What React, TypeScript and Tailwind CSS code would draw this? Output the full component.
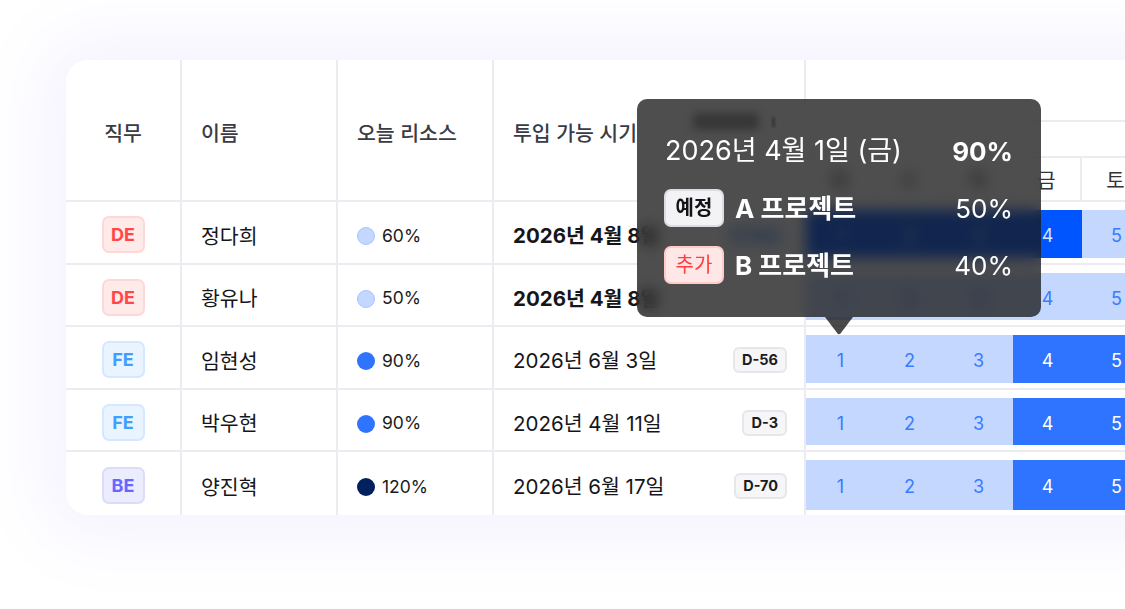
import React from "react";

type Cell = "L" | "M" | "B";
type Row = {
  role: "DE" | "FE" | "BE";
  name: string;
  res: string;
  dot: string;
  date: string;
  bold?: boolean;
  dday?: string;
  ddayBlue?: boolean;
  cells: Cell[];
  h: string;
  last?: boolean;
};

const rows: Row[] = [
  { role: "DE", name: "정다희", res: "60%", dot: "bg-[#c3d7ff] border border-[#a8c4ff]", date: "2026년 4월 8일", bold: true, dday: "D-Day", ddayBlue: true, cells: ["B", "B", "B", "B", "L"], h: "h-[63px]" },
  { role: "DE", name: "황유나", res: "50%", dot: "bg-[#c3d7ff] border border-[#a8c4ff]", date: "2026년 4월 8일", bold: true, cells: ["L", "L", "L", "L", "L"], h: "h-[62px]" },
  { role: "FE", name: "임현성", res: "90%", dot: "bg-[#2f74ff]", date: "2026년 6월 3일", dday: "D-56", cells: ["L", "L", "L", "M", "M"], h: "h-[63px]" },
  { role: "FE", name: "박우현", res: "90%", dot: "bg-[#2f74ff]", date: "2026년 4월 11일", dday: "D-3", cells: ["L", "L", "L", "M", "M"], h: "h-[62px]" },
  { role: "BE", name: "양진혁", res: "120%", dot: "bg-[#02205e]", date: "2026년 6월 17일", dday: "D-70", cells: ["L", "L", "L", "M", "M"], h: "h-[63px]", last: true },
];

const roleStyle: Record<Row["role"], string> = {
  DE: "bg-[#ffeaea] border-[#ffd7d7] text-[#ff4747]",
  FE: "bg-[#eaf4ff] border-[#d5e8ff] text-[#3f9eff]",
  BE: "bg-[#ececff] border-[#dcdcf8] text-[#6767ff]",
};

const cellStyle: Record<Cell, string> = {
  L: "bg-[#c3d7ff] text-[#3a7bff]",
  M: "bg-[#2f74ff] text-white",
  B: "bg-[#0055ff] text-[#d6e3ff]",
};

const days = ["화", "수", "목", "금", "토"];

export default function App() {
  return (
    <div className="relative w-[1125px] h-[609px] overflow-hidden bg-white font-['Inter','Noto_Sans_CJK_KR',sans-serif]">
      <div className="pl-[66px] pt-[60px]">
        <div className="w-[1130px] rounded-l-[22px] bg-white overflow-hidden shadow-[0_0_70px_20px_rgba(125,95,240,0.085)]">
          {/* header */}
          <div className="flex h-[142px] border-b-2 border-[#ebebf0]">
            <div className="w-[116px] shrink-0 border-r-2 border-[#ebebf0] flex items-center justify-center pt-[8px] text-[20.5px] font-medium text-[#3b3b45]">직무</div>
            <div className="w-[156px] shrink-0 border-r-2 border-[#ebebf0] flex items-center pl-[19px] pt-[8px] text-[20.5px] font-medium text-[#3b3b45]">이름</div>
            <div className="w-[156px] shrink-0 border-r-2 border-[#ebebf0] flex items-center pl-[19px] pt-[8px] text-[20.5px] font-medium text-[#3b3b45]">오늘 리소스</div>
            <div className="w-[312px] shrink-0 border-r-2 border-[#ebebf0] flex items-center pl-[19px] pt-[8px] text-[20.5px] font-medium text-[#3b3b45]">투입 가능 시기</div>
            <div className="flex flex-col flex-1">
              <div className="h-[62px] border-b-2 border-[#ebebf0]" />
              <div className="h-[36px] border-b-2 border-[#ebebf0]" />
              <div className="flex flex-1">
                {days.map((d) => (
                  <div key={d} className="w-[69px] shrink-0 border-r-2 border-[#ebebf0] flex items-center justify-center pt-[3px] text-[20px] text-[#333338]">
                    {d}
                  </div>
                ))}
              </div>
            </div>
          </div>
          {/* rows */}
          {rows.map((r, i) => (
            <div key={i} className={`flex ${r.h} ${r.last ? "" : "border-b-2 border-[#ebebf0]"}`}>
              <div className="w-[116px] shrink-0 border-r-2 border-[#ebebf0] flex items-center justify-center pt-[4px]">
                <div className={`w-[43px] h-[37px] rounded-[7px] border-2 flex items-center justify-center text-[18px] font-bold ${roleStyle[r.role]}`}>{r.role}</div>
              </div>
              <div className="w-[156px] shrink-0 border-r-2 border-[#ebebf0] flex items-center pl-[19px] pt-[9px] text-[20.5px] text-[#16161a]">{r.name}</div>
              <div className="w-[156px] shrink-0 border-r-2 border-[#ebebf0] flex items-center pl-[19px] pt-[7px] gap-[7px]">
                <span className={`w-[18px] h-[18px] rounded-full ${r.dot}`} />
                <span className="text-[17.5px] text-[#1b1b20]">{r.res}</span>
              </div>
              <div className="w-[312px] shrink-0 border-r-2 border-[#ebebf0] flex items-center justify-between pl-[19px] pr-[17px] pt-[5px]">
                <span className={`text-[20.5px] pt-[3px] text-[#16161a] ${r.bold ? "font-bold" : ""}`}>{r.date}</span>
                {r.dday && (
                  <span className={`h-[26px] px-[7px] rounded-[6px] border-2 flex items-center text-[14.5px] font-bold ${r.ddayBlue ? "bg-[#e7f0ff] border-[#d2e2ff] text-[#2f74ff]" : "bg-[#f6f6f8] border-[#e6e6eb] text-[#1b1b20]"}`}>
                    {r.dday}
                  </span>
                )}
              </div>
              <div className="flex flex-1 pt-[8px] pb-[5px]">
                {r.cells.map((c, j) => (
                  <div key={j} className={`w-[69px] shrink-0 flex items-center justify-center pt-[3px] text-[18px] ${cellStyle[c]}`}>{j + 1}</div>
                ))}
              </div>
            </div>
          ))}
        </div>
      </div>

      {/* tooltip */}
      <div className="absolute left-[637px] top-[99px] w-[404px] h-[218px] rounded-[10px] bg-[rgba(22,22,22,0.76)] backdrop-blur-[7px] px-[28px] pt-[36px] text-white">
        <div className="absolute left-[56px] top-[14px] w-[66px] h-[17px] rounded-[4px] bg-black/30 blur-[4px]" />
        <div className="absolute left-[135px] top-[18px] w-[3px] h-[10px] bg-black/30 blur-[1px]" />
        <div className="relative flex items-center justify-between h-[32px]">
          <span className="text-[27px]">2026년 4월 1일 (금)</span>
          <span className="text-[26px] font-bold">90%</span>
        </div>
        <div className="relative flex items-center justify-between mt-[22px] h-[38px]">
          <div className="flex items-center gap-[11px] -ml-[1px]">
            <span className="w-[60px] h-[38px] rounded-[7px] bg-[#f3f3f5] border-2 border-[#dcdce2] flex items-center justify-center text-[20px] font-bold text-[#141418]">예정</span>
            <span className="text-[26px] font-bold">A 프로젝트</span>
          </div>
          <span className="text-[26px]">50%</span>
        </div>
        <div className="relative flex items-center justify-between mt-[19px] h-[38px]">
          <div className="flex items-center gap-[11px] -ml-[1px]">
            <span className="w-[60px] h-[38px] rounded-[7px] bg-[#ffe7e7] border-2 border-[#ffcaca] flex items-center justify-center text-[20px] text-[#ff3e3e]">추가</span>
            <span className="text-[26px] font-bold">B 프로젝트</span>
          </div>
          <span className="text-[26px]">40%</span>
        </div>
      </div>
      <svg className="absolute left-[825px] top-[317px]" width="28" height="18" viewBox="0 0 28 18">
        <path d="M0 0 H28 L15.5 16.5 Q14 18 12.5 16.5 Z" fill="rgba(22,22,22,0.78)" />
      </svg>
    </div>
  );
}
